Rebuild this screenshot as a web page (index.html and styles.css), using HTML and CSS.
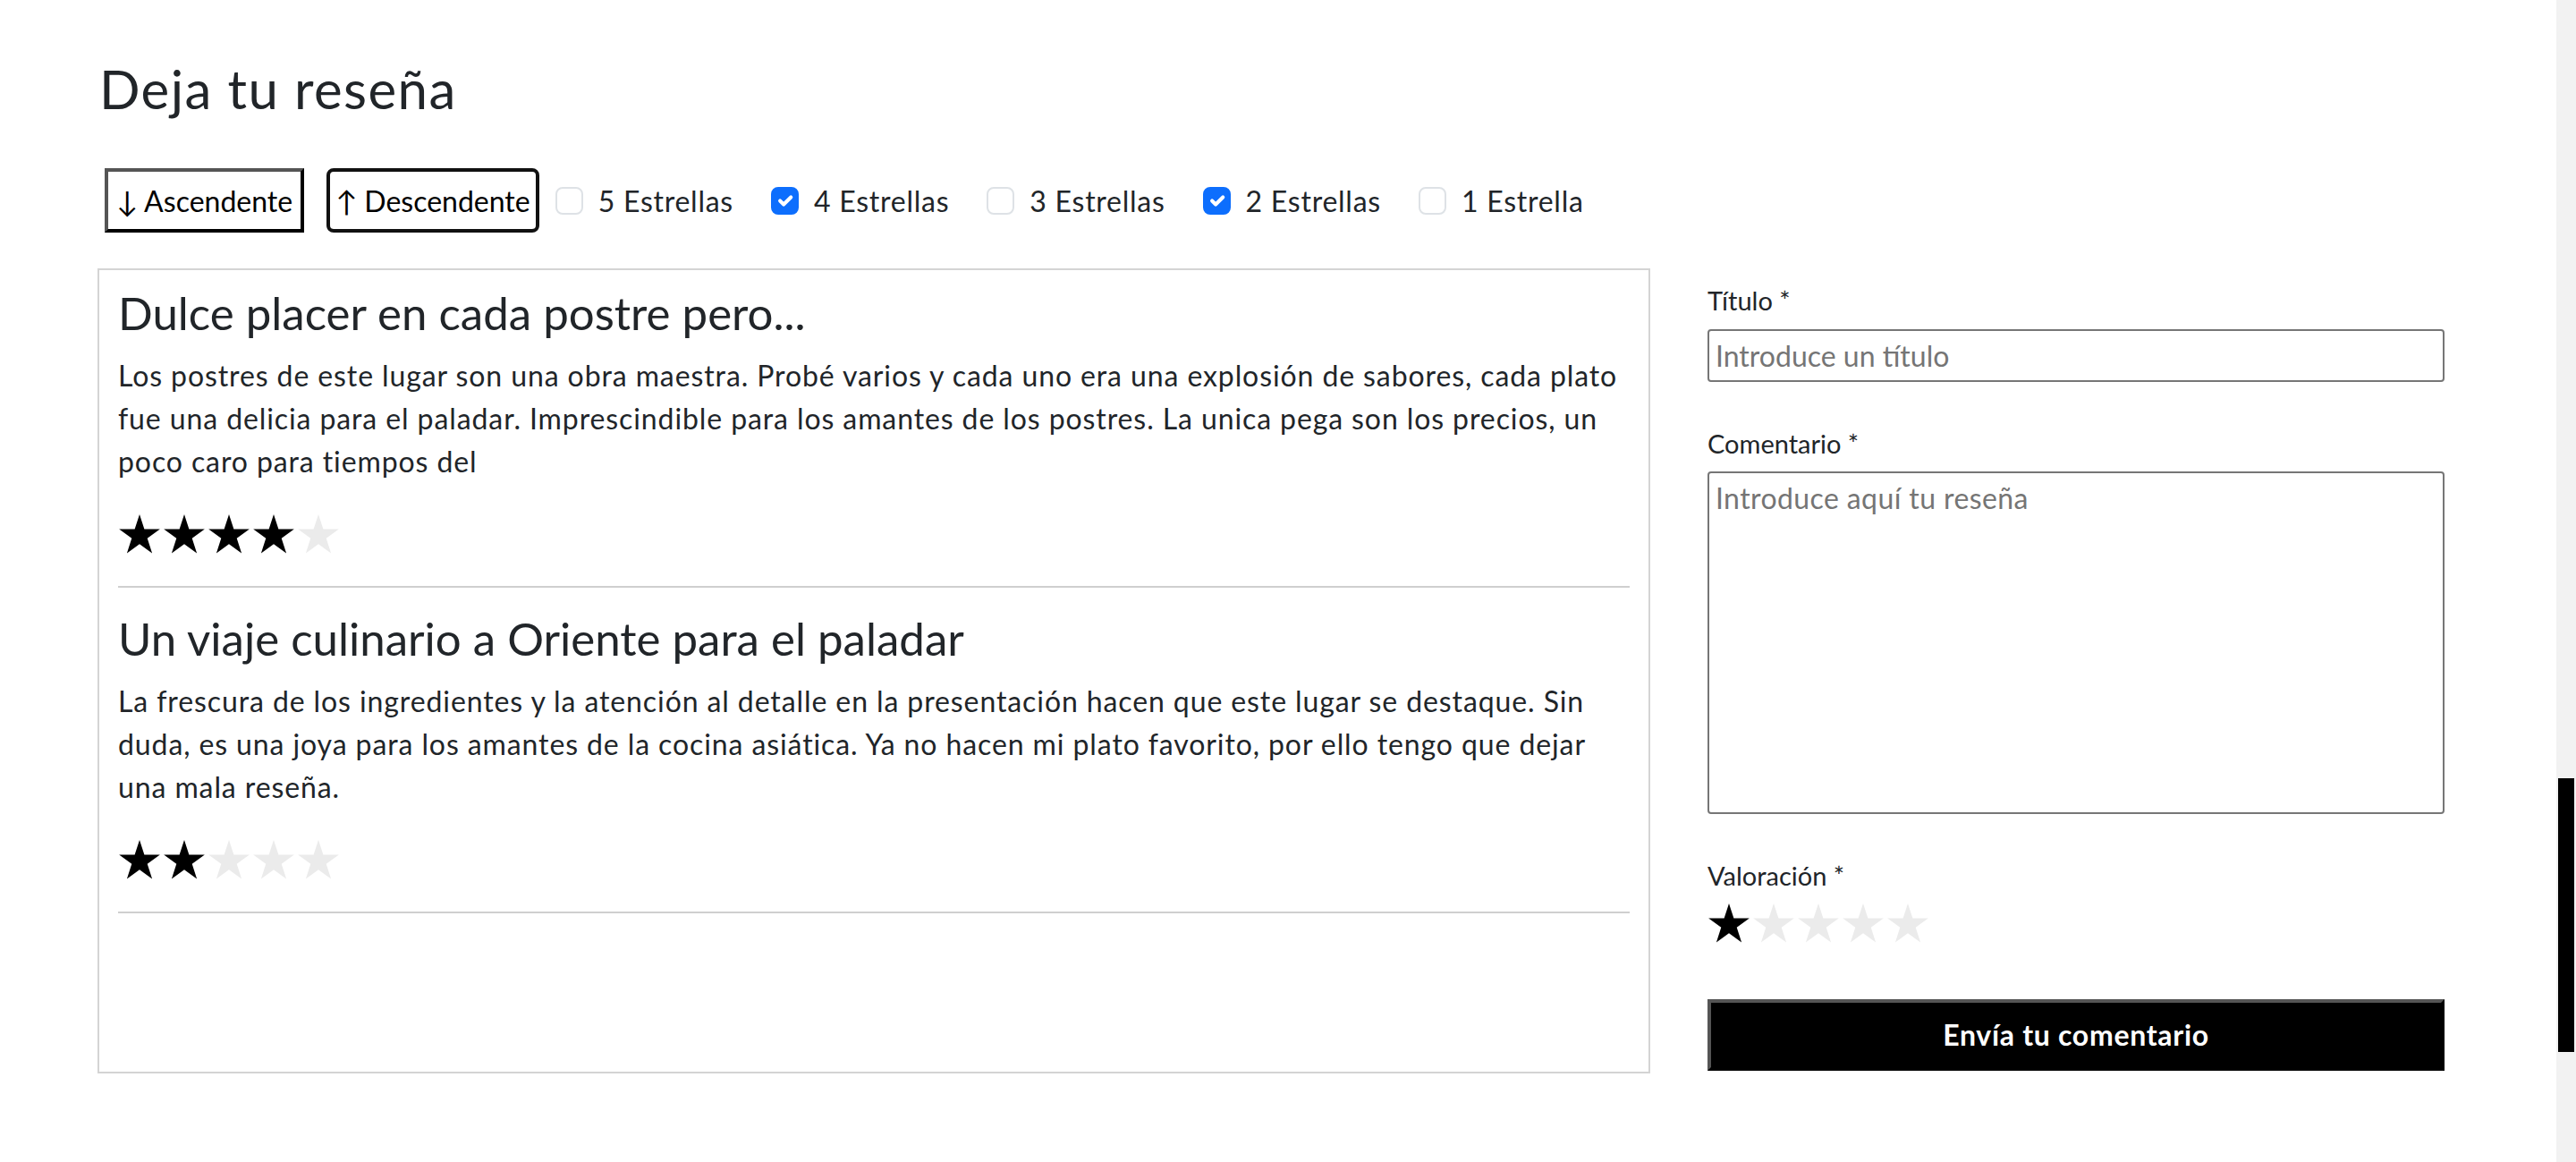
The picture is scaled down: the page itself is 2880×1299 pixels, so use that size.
FILE: index.html
```html
<!DOCTYPE html>
<html lang="es">
<head>
<meta charset="utf-8">
<title>Deja tu reseña</title>
<link rel="stylesheet" href="styles.css">
</head>
<body>
<div class="page">
  <main class="main">
    <h2 class="heading">Deja tu reseña</h2>

    <div class="filters">
      <button class="sort-btn sort-asc" type="button">↓ Ascendente</button>
      <button class="sort-btn sort-desc" type="button">↑ Descendente</button>

      <label class="check">
        <span class="box"></span>
        <span class="check-label">5 Estrellas</span>
      </label>
      <label class="check">
        <span class="box box-on"><svg viewBox="0 0 20 20" width="100%" height="100%"><path d="M6 10l3 3 6-6" fill="none" stroke="#fff" stroke-width="3" stroke-linecap="round" stroke-linejoin="round"/></svg></span>
        <span class="check-label">4 Estrellas</span>
      </label>
      <label class="check">
        <span class="box"></span>
        <span class="check-label">3 Estrellas</span>
      </label>
      <label class="check">
        <span class="box box-on"><svg viewBox="0 0 20 20" width="100%" height="100%"><path d="M6 10l3 3 6-6" fill="none" stroke="#fff" stroke-width="3" stroke-linecap="round" stroke-linejoin="round"/></svg></span>
        <span class="check-label">2 Estrellas</span>
      </label>
      <label class="check">
        <span class="box"></span>
        <span class="check-label">1 Estrella</span>
      </label>
    </div>

    <div class="content">
      <section class="reviews">
        <article class="review">
          <h4 class="review-title">Dulce placer en cada postre pero...</h4>
          <p class="review-text">Los postres de este lugar son una obra maestra. Probé varios y cada uno era una explosión de sabores, cada plato fue una delicia para el paladar. Imprescindible para los amantes de los postres. La unica pega son los precios, un poco caro para tiempos del</p>
          <div class="stars">
            <svg class="star on" viewBox="0 0 48 48"><path d="M24 1L29.39 17.58L46.83 17.58L32.72 27.83L38.11 44.42L24 34.17L9.89 44.42L15.28 27.83L1.17 17.58L18.61 17.58Z"/></svg>
            <svg class="star on" viewBox="0 0 48 48"><path d="M24 1L29.39 17.58L46.83 17.58L32.72 27.83L38.11 44.42L24 34.17L9.89 44.42L15.28 27.83L1.17 17.58L18.61 17.58Z"/></svg>
            <svg class="star on" viewBox="0 0 48 48"><path d="M24 1L29.39 17.58L46.83 17.58L32.72 27.83L38.11 44.42L24 34.17L9.89 44.42L15.28 27.83L1.17 17.58L18.61 17.58Z"/></svg>
            <svg class="star on" viewBox="0 0 48 48"><path d="M24 1L29.39 17.58L46.83 17.58L32.72 27.83L38.11 44.42L24 34.17L9.89 44.42L15.28 27.83L1.17 17.58L18.61 17.58Z"/></svg>
            <svg class="star" viewBox="0 0 48 48"><path d="M24 1L29.39 17.58L46.83 17.58L32.72 27.83L38.11 44.42L24 34.17L9.89 44.42L15.28 27.83L1.17 17.58L18.61 17.58Z"/></svg>
          </div>
          <hr class="sep">
        </article>
        <article class="review">
          <h4 class="review-title">Un viaje culinario a Oriente para el paladar</h4>
          <p class="review-text">La frescura de los ingredientes y la atención al detalle en la presentación hacen que este lugar se destaque. Sin duda, es una joya para los amantes de la cocina asiática. Ya no hacen mi plato favorito, por ello tengo que dejar una mala reseña.</p>
          <div class="stars">
            <svg class="star on" viewBox="0 0 48 48"><path d="M24 1L29.39 17.58L46.83 17.58L32.72 27.83L38.11 44.42L24 34.17L9.89 44.42L15.28 27.83L1.17 17.58L18.61 17.58Z"/></svg>
            <svg class="star on" viewBox="0 0 48 48"><path d="M24 1L29.39 17.58L46.83 17.58L32.72 27.83L38.11 44.42L24 34.17L9.89 44.42L15.28 27.83L1.17 17.58L18.61 17.58Z"/></svg>
            <svg class="star" viewBox="0 0 48 48"><path d="M24 1L29.39 17.58L46.83 17.58L32.72 27.83L38.11 44.42L24 34.17L9.89 44.42L15.28 27.83L1.17 17.58L18.61 17.58Z"/></svg>
            <svg class="star" viewBox="0 0 48 48"><path d="M24 1L29.39 17.58L46.83 17.58L32.72 27.83L38.11 44.42L24 34.17L9.89 44.42L15.28 27.83L1.17 17.58L18.61 17.58Z"/></svg>
            <svg class="star" viewBox="0 0 48 48"><path d="M24 1L29.39 17.58L46.83 17.58L32.72 27.83L38.11 44.42L24 34.17L9.89 44.42L15.28 27.83L1.17 17.58L18.61 17.58Z"/></svg>
          </div>
          <hr class="sep">
        </article>
      </section>

      <form class="review-form">
        <div class="field">
          <label class="field-label" for="titulo">Título *</label>
          <input class="input" id="titulo" type="text" placeholder="Introduce un título">
        </div>
        <div class="field">
          <label class="field-label" for="comentario">Comentario *</label>
          <textarea class="input textarea" id="comentario" placeholder="Introduce aquí tu reseña"></textarea>
        </div>
        <div class="field">
          <span class="field-label">Valoración *</span>
          <div class="stars form-stars">
            <svg class="star on" viewBox="0 0 48 48"><path d="M24 1L29.39 17.58L46.83 17.58L32.72 27.83L38.11 44.42L24 34.17L9.89 44.42L15.28 27.83L1.17 17.58L18.61 17.58Z"/></svg>
            <svg class="star" viewBox="0 0 48 48"><path d="M24 1L29.39 17.58L46.83 17.58L32.72 27.83L38.11 44.42L24 34.17L9.89 44.42L15.28 27.83L1.17 17.58L18.61 17.58Z"/></svg>
            <svg class="star" viewBox="0 0 48 48"><path d="M24 1L29.39 17.58L46.83 17.58L32.72 27.83L38.11 44.42L24 34.17L9.89 44.42L15.28 27.83L1.17 17.58L18.61 17.58Z"/></svg>
            <svg class="star" viewBox="0 0 48 48"><path d="M24 1L29.39 17.58L46.83 17.58L32.72 27.83L38.11 44.42L24 34.17L9.89 44.42L15.28 27.83L1.17 17.58L18.61 17.58Z"/></svg>
            <svg class="star" viewBox="0 0 48 48"><path d="M24 1L29.39 17.58L46.83 17.58L32.72 27.83L38.11 44.42L24 34.17L9.89 44.42L15.28 27.83L1.17 17.58L18.61 17.58Z"/></svg>
          </div>
        </div>
        <button class="submit" type="button">Envía tu comentario</button>
      </form>
    </div>
  </main>
  <div class="scrollbar"><div class="thumb"></div></div>
</div>
</body>
</html>
```

FILE: styles.css
```css
* { box-sizing: border-box; }

html, body {
  margin: 0;
  padding: 0;
  background: #fff;
}

body {
  font-family: Lato, "Noto Sans", sans-serif;
  color: #212529;
}

.page {
  display: flex;
  height: 100vh;
  overflow: hidden;
}

.main {
  flex: 1;
  padding: 63px 0 0 109px;
}

.heading {
  margin: 0;
  padding-left: 2px;
  font-size: 60px;
  line-height: 72px;
  font-weight: 400;
  letter-spacing: 1.4px;
  color: #212529;
}

.filters {
  display: flex;
  align-items: center;
  margin-top: 53px;
  padding-left: 8px;
}

.sort-btn {
  height: 72px;
  padding: 0 9px;
  font-family: Lato, "Noto Sans", sans-serif;
  font-size: 32px;
  color: #000;
  background: #fff;
  cursor: pointer;
}

.sort-asc {
  border: 4px solid;
  border-color: #555 #000 #000 #555;
  border-radius: 0;
}

.sort-desc {
  margin-left: 25px;
  padding: 0 6px;
  border: 4px solid #111;
  border-radius: 8px;
}

.check {
  display: flex;
  align-items: center;
  margin-left: 18px;
  margin-right: 24px;
  font-size: 32px;
  letter-spacing: 0.75px;
  color: #212529;
}

.box {
  width: 31px;
  height: 31px;
  border: 2px solid #dee2e6;
  border-radius: 8px;
  background: #fff;
  margin-right: 17px;
  display: flex;
}

.box-on {
  background: #0d6efd;
  border-color: #0d6efd;
}

.content {
  display: flex;
  align-items: flex-start;
  margin-top: 40px;
}

.reviews {
  width: 1736px;
  height: 900px;
  border: 2px solid #d4d4d4;
  padding: 17px 21px 0 21px;
  overflow: hidden;
}

.review-title {
  margin: 0 0 16px;
  font-size: 51px;
  line-height: 61px;
  font-weight: 400;
  color: #212529;
}

.review + .review .review-title {
  margin-top: 26px;
}

.review-text {
  margin: 0 0 34px;
  font-size: 32px;
  line-height: 48px;
  letter-spacing: 0.9px;
}

.stars {
  display: flex;
  gap: 2px;
  height: 48px;
}

.star {
  width: 48px;
  height: 48px;
  fill: #ebebeb;
}

.star.on {
  fill: #000;
}

.sep {
  margin: 33px 0 0;
  border: 0;
  border-top: 2px solid #cfcfcf;
  height: 0;
}

.review-form {
  width: 824px;
  margin-left: 64px;
  padding-top: 14px;
}

.field {
  margin-bottom: 47px;
}

.field-label {
  display: block;
  font-size: 29px;
  line-height: 43.5px;
  margin-bottom: 10px;
  color: #212529;
}

.input {
  display: block;
  width: 100%;
  height: 59px;
  border: 2px solid #767676;
  border-radius: 4px;
  padding: 0 7px;
  font-family: Lato, "Noto Sans", sans-serif;
  font-size: 32px;
  color: #212529;
  background: #fff;
}

.input::placeholder {
  color: #757575;
}

.textarea {
  height: 383px;
  padding: 4px 7px;
  line-height: 48px;
  resize: none;
}

.textarea::placeholder {
  letter-spacing: 0.4px;
}

.form-stars {
  margin-top: -2px;
}

.submit {
  display: block;
  width: 100%;
  height: 80px;
  margin-top: 60px;
  background: #000;
  color: #fff;
  border: 4px solid;
  border-color: #555 #000 #000 #555;
  font-family: Lato, "Noto Sans", sans-serif;
  font-size: 32px;
  font-weight: 700;
  letter-spacing: 0.7px;
  cursor: pointer;
}

.scrollbar {
  width: 22px;
  background: #f2f2f2;
  display: flex;
  justify-content: center;
}

.thumb {
  width: 18px;
  height: 306px;
  margin-top: 870px;
  background: #000;
}
```
